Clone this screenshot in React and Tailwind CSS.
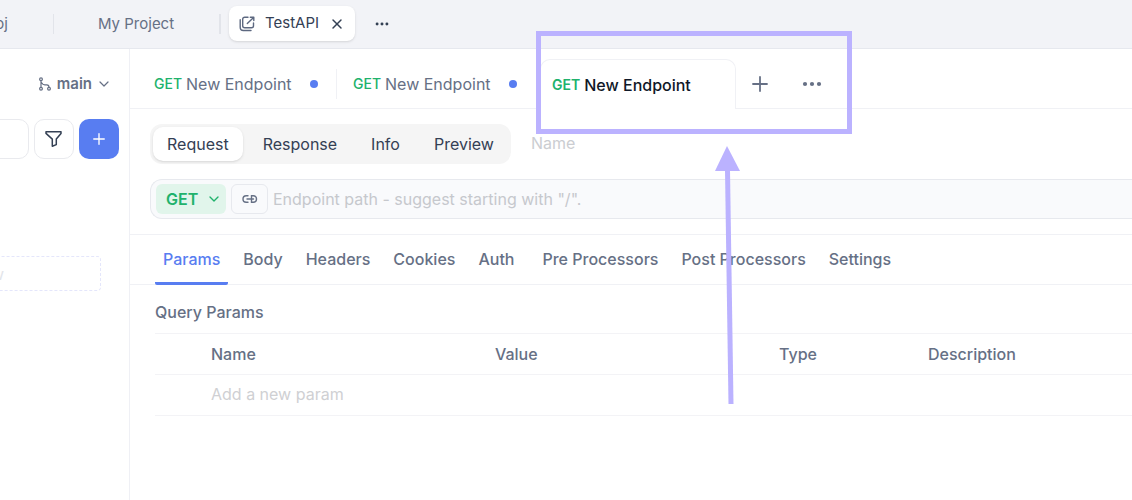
import { ChevronDown, Plus, X } from "lucide-react";

const viewTabs = ["Request", "Response", "Info", "Preview"];

const requestTabGroups = [
  ["Params", "Body", "Headers", "Cookies", "Auth"],
  ["Pre Processors", "Post Processors", "Settings"],
];

function DotsIcon({ className }) {
  return (
    <svg viewBox="0 0 20 20" fill="currentColor" className={className}>
      <circle cx="3" cy="10" r="2.1" />
      <circle cx="10" cy="10" r="2.1" />
      <circle cx="17" cy="10" r="2.1" />
    </svg>
  );
}

function ProjectIcon() {
  return (
    <svg
      viewBox="0 0 16 16"
      fill="none"
      stroke="currentColor"
      strokeWidth="1.4"
      strokeLinecap="round"
      strokeLinejoin="round"
      className="size-4 text-[#5d6880]"
    >
      <path d="M9 1.2H5.7a2 2 0 0 0-2 2v6.6a2 2 0 0 0 2 2h6.8a2 2 0 0 0 2-2V7" />
      <path d="M11.3 1.2h3.5v3.3M14.6 1.4 8.3 7.6" />
      <path d="M1.2 3.8v7.5a3.2 3.2 0 0 0 3.2 3.2H12" />
    </svg>
  );
}

function BranchIcon() {
  return (
    <svg
      viewBox="0 0 14 14"
      fill="none"
      stroke="currentColor"
      strokeWidth="1.2"
      className="size-[14px]"
    >
      <circle cx="3" cy="2.3" r="1.4" />
      <circle cx="3" cy="11.7" r="1.4" />
      <circle cx="11" cy="11.7" r="1.4" />
      <path d="M3 3.7v6.6M3 5.2l1.800 2c.5.5 1 .6 2 .6h2c1.500 0 2.200.8 2.200 2.500" />
    </svg>
  );
}

function FilterIcon() {
  return (
    <svg
      viewBox="0 0 18 18"
      fill="none"
      stroke="currentColor"
      strokeWidth="1.5"
      strokeLinejoin="round"
      className="size-[18px]"
    >
      <path d="M1 1.800h15v1.600l-4.700 5.700v5.500l-4 1.700V9.100L1 3.400z" />
    </svg>
  );
}

function LinkIcon() {
  return (
    <svg
      viewBox="0 0 16 10"
      fill="none"
      stroke="currentColor"
      strokeWidth="1.4"
      strokeLinecap="round"
      className="h-[10px] w-4"
    >
      <path d="M6 1.800H4.200a3.200 3.200 0 0 0 0 6.400H6" />
      <path d="M9.500 1.800h1.800a3.200 3.200 0 0 1 0 6.400H9.500zM5 5h6.500" />
    </svg>
  );
}

function TopBar() {
  return (
    <header className="flex h-[49px] items-center border-b border-[#e6e8ee] bg-[#f2f3f7] pb-px text-[15px] text-[#667085]">
      <div className="flex h-5 w-[54px] justify-end overflow-hidden border-r border-[#e2e4ea] whitespace-nowrap">
        <a href="#proj" className="mr-[45px] leading-5">
          Proj
        </a>
      </div>
      <a
        href="#my-project"
        className="w-[167px] border-r-2 border-[#e2e4ea] pl-11 leading-5"
      >
        My Project
      </a>
      <div className="ml-2 flex h-[35px] items-center rounded-lg bg-white px-[10px] text-[#344054] shadow-sm">
        <ProjectIcon />
        <span className="ml-[10px]">TestAPI</span>
        <button aria-label="Close project" className="ml-[10px]">
          <X size={16} strokeWidth={2.2} />
        </button>
      </div>
      <button aria-label="More projects" className="ml-5 text-[#344054]">
        <DotsIcon className="size-[14px]" />
      </button>
    </header>
  );
}

function Sidebar() {
  return (
    <aside className="w-[130px] shrink-0 overflow-hidden border-r border-[#eff0f5]">
      <div className="flex h-[70px] items-center justify-end pr-[17px]">
        <button className="flex items-center text-[15px] text-[#667085]">
          <BranchIcon />
          <span className="ml-[5px] font-semibold">main</span>
          <ChevronDown size={16} strokeWidth={1.800} className="ml-1" />
        </button>
      </div>
      <div className="flex justify-end gap-[5px] pr-[10px]">
        <input
          aria-label="Search"
          className="h-10 w-40 shrink-0 rounded-[10px] border border-[#e9eaee]"
        />
        <button
          aria-label="Filter"
          className="flex size-10 shrink-0 items-center justify-center rounded-[10px] border border-[#e9eaee] text-[#344054]"
        >
          <FilterIcon />
        </button>
        <button
          aria-label="Add"
          className="flex size-10 shrink-0 items-center justify-center rounded-[10px] bg-[#587df1] text-white"
        >
          <Plus size={18} strokeWidth={1.800} />
        </button>
      </div>
      <div className="mt-[97px] flex justify-end pr-7">
        <button className="h-[35px] w-52 shrink-0 rounded border border-dashed border-[#e4e6fb] pr-24 text-right text-[#e3e5ea]">
          New
        </button>
      </div>
    </aside>
  );
}

function DraftTab({ className }) {
  return (
    <button
      className={`flex items-center border-b border-[#f0f1f5] text-[#667085] ${className}`}
    >
      <span className="text-sm font-medium text-[#20b26c]">GET</span>
      <span className="ml-1">New Endpoint</span>
      <span className="ml-[18px] size-2 rounded-full bg-[#587df1]" />
    </button>
  );
}

function EndpointTabs() {
  return (
    <nav className="flex h-[60px] pt-[10px]">
      <DraftTab className="w-[206px] pl-6" />
      <div className="border-b border-[#f0f1f5] pt-[10px]">
        <div className="h-[30px] w-px bg-[#f0f1f5]" />
      </div>
      <DraftTab className="w-[203px] pl-4" />
      <button className="flex w-[196px] items-center rounded-t-[10px] border border-b-0 border-[#f0f1f5] pl-[11px] font-medium text-[#101828]">
        <span className="text-sm font-semibold text-[#20b26c]">GET</span>
        <span className="ml-1">New Endpoint</span>
      </button>
      <div className="flex flex-1 items-center gap-[30px] border-b border-[#f0f1f5] pl-3 text-[#667085]">
        <button aria-label="New tab">
          <Plus size={24} strokeWidth={1.800} />
        </button>
        <button aria-label="More tabs">
          <DotsIcon className="size-5" />
        </button>
      </div>
    </nav>
  );
}

function ViewSwitch() {
  return (
    <div className="flex items-center gap-5 pt-[15px] pl-5">
      <div className="flex gap-[6px] rounded-xl bg-[#f5f5f5] p-[3px] text-[#344054]">
        {viewTabs.map((tab) => (
          <button
            key={tab}
            className={
              tab === "Request"
                ? "h-[34px] rounded-[10px] bg-white px-[14px] shadow"
                : "h-[34px] px-[14px]"
            }
          >
            {tab}
          </button>
        ))}
      </div>
      <input
        aria-label="Name"
        placeholder="Name"
        className="min-w-0 flex-1 pb-[2px] outline-none placeholder:text-[#cbcdd1]"
      />
    </div>
  );
}

function UrlBar() {
  return (
    <div className="mt-[15px] ml-5 flex h-10 items-center gap-[5px] rounded-l-xl border border-r-0 border-[#e7e9ee] bg-[#f9fafc] pl-[5px]">
      <div className="relative h-[30px] text-[#20b26c]">
        <select
          aria-label="Method"
          className="h-[30px] w-[70px] appearance-none rounded-md bg-[#e1f5eb] pl-[10px] font-semibold outline-none"
        >
          <option>GET</option>
          <option>POST</option>
          <option>PUT</option>
          <option>DELETE</option>
        </select>
        <ChevronDown
          size={16}
          className="pointer-events-none absolute top-[7px] right-1"
        />
      </div>
      <button
        aria-label="Insert link"
        className="flex h-[30px] w-[37px] items-center justify-center rounded-md border border-[#e7e9ee] text-[#667085]"
      >
        <LinkIcon />
      </button>
      <input
        aria-label="Endpoint path"
        placeholder={'Endpoint path - suggest starting with "/".'}
        className="min-w-0 flex-1 outline-none placeholder:text-[#c6c8cd]"
      />
    </div>
  );
}

function RequestTabs() {
  return (
    <nav className="mt-[15px] flex h-[51px] gap-3 border-y border-[#f0f1f5] pl-[25px] font-medium text-[#667085]">
      {requestTabGroups.map((group) => (
        <div key={group[0]} className="-mb-px flex gap-[7px]">
          {group.map((tab) => (
            <button
              key={tab}
              className={
                tab === "Params"
                  ? "rounded-b-xs border-b-[3px] border-[#587df1] px-2 text-[#587df1]"
                  : "px-2 pb-[3px]"
              }
            >
              {tab}
            </button>
          ))}
        </div>
      ))}
    </nav>
  );
}

function QueryParams() {
  return (
    <section className="pl-[25px] text-[#667085]">
      <h2 className="pt-[19px] pb-[13px] leading-4 font-medium">
        Query Params
      </h2>
      <table className="w-full table-fixed text-left">
        <thead>
          <tr className="h-[41px] border-t border-[#f3f3f6]">
            <th className="w-12" aria-label="Enabled" />
            <th className="w-[284px] px-2 font-medium">Name</th>
            <th className="w-[284px] px-2 font-medium">Value</th>
            <th className="w-[149px] px-2 font-medium">Type</th>
            <th className="px-2 font-medium">Description</th>
          </tr>
        </thead>
        <tbody>
          <tr className="h-[41px] border-y border-[#f3f3f6]">
            <td />
            <td className="px-2">
              <input
                aria-label="Add a new param"
                placeholder="Add a new param"
                className="w-full pb-[2px] outline-none placeholder:text-[#cfd0d3]"
              />
            </td>
            <td />
            <td />
            <td />
          </tr>
        </tbody>
      </table>
    </section>
  );
}

// Callout drawn over the tab strip
function Callout() {
  return (
    <div className="pointer-events-none absolute top-[31px] left-[536px]">
      <div className="h-[103px] w-[316px] border-5 border-[#bbb2ff]" />
      <svg viewBox="0 0 28 260" className="mt-3 ml-[178px] h-[260px] w-7">
        <path d="M13 0 26 25H1z" fill="#bbb2ff" />
        <path d="M13.500 24 17 258" stroke="#bbb2ff" strokeWidth="5" />
      </svg>
    </div>
  );
}

function App() {
  return (
    <div className="relative flex min-h-screen flex-col overflow-hidden bg-white font-[Inter,sans-serif] text-base">
      <TopBar />
      <div className="flex flex-1">
        <Sidebar />
        <main className="min-w-0 flex-1">
          <EndpointTabs />
          <ViewSwitch />
          <UrlBar />
          <RequestTabs />
          <QueryParams />
        </main>
      </div>
      <Callout />
    </div>
  );
}

export default App;
